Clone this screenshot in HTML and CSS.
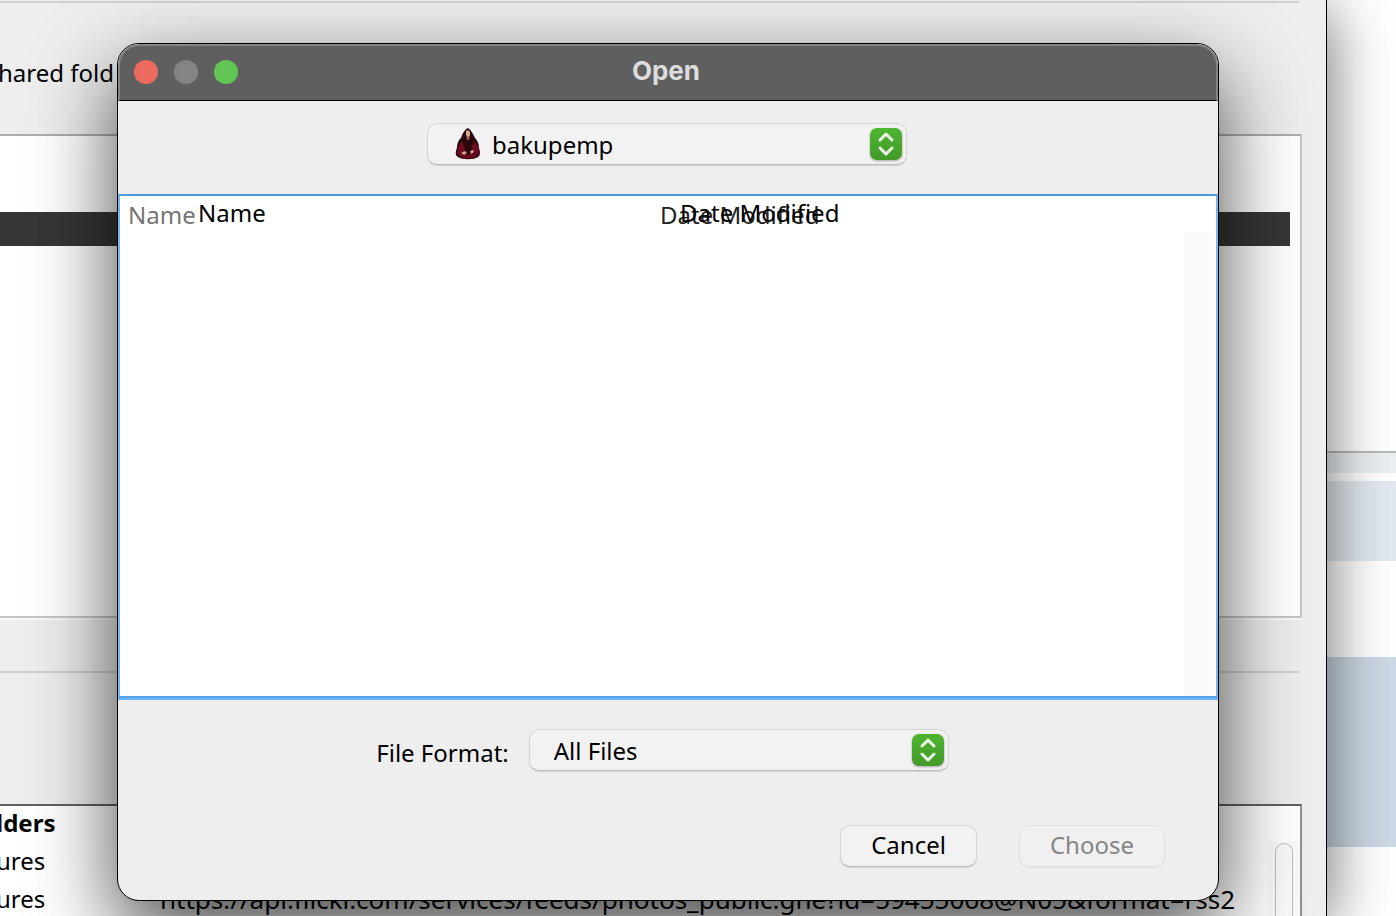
FILE: index.html
```
<!DOCTYPE html>
<html lang="en">
<head>
    <meta charset="UTF-8">
    <meta name="viewport" content="width=device-width, initial-scale=1.0">
    <title>Open</title>
    <link rel="stylesheet" href="styles.css">
</head>
<body>

    <div class="desktop">
        <div class="app-window">
            <hr class="rule">
            <p class="intro">hared fold</p>
            <div class="list-box">
                <div class="selected-row"></div>
            </div>
            <hr class="rule">
            <div class="feed-box">
                <div class="feeds">
                    <div class="feed feed-head">lders</div>
                    <div class="feed"><span>ures</span></div>
                    <div class="feed"><span>ures</span><span class="url">https://api.flickr.com/services/feeds/photos_public.gne?id=59455068@N05&amp;format=rss2</span></div>
                </div>
                <div class="scroll-track"><div class="scroll-thumb"></div></div>
            </div>
        </div>
        <div class="behind">
            <div class="strip strip-light"></div>
            <div class="strip strip-pale"></div>
            <div class="strip strip-blue"></div>
        </div>
    </div>

    <div class="dialog" role="dialog" aria-labelledby="dialogTitle">
        <div class="titlebar">
            <div class="lights">
                <button class="light red" aria-label="Close"></button>
                <button class="light gray" aria-label="Minimize" disabled></button>
                <button class="light green" aria-label="Zoom"></button>
            </div>
            <h1 class="title" id="dialogTitle">Open</h1>
        </div>

        <form class="content">
            <div class="location">
                <div class="combo combo-folder">
                    <select class="select" aria-label="Folder">
                        <option>bakupemp</option>
                    </select>
                    <svg class="avatar" width="26" height="32" viewBox="0 0 26 32">
                        <path d="M13 0C9 2 7.500 6 6 10C3 12 2 17 2 20C0 24 .5 28 3 29C8 32 18 32 23 29C26 27 25 23 24 20C24 15 22 12 20 10C18 6 16 2 13 0Z" fill="#2a080d"/>
                        <path d="M3 20L7 13L10 22L6 28L2 26ZM23 18L19 13L17 22L20 27L24 25Z" fill="#710b20"/>
                        <path d="M8 24L13 27L19 24L22 28Q13 33 4 28Z" fill="#650b1b"/>
                        <path d="M11 3Q13 1 15 4L15 8L13 10L11 7Z" fill="#d5aa91"/>
                        <path d="M11 7L13 9L15 7L14 12H12Z" fill="#8b6254"/>
                        <path d="M6 25L10 23L12 25L9 27ZM15 23L18 22L19 24L16 26Z" fill="#d7a18c"/>
                    </svg>
                    <svg class="arrows" width="34" height="34" viewBox="0 0 34 34">
                        <rect x="1" y="1" width="32" height="32" rx="7"/>
                        <path d="M11 13L17 7L23 13M11 21L17 27L23 21"/>
                    </svg>
                </div>
            </div>

            <div class="file-list">
                <table class="files">
                    <thead>
                        <tr>
                            <th class="col-name">Name<span class="ghost ghost-name">Name</span></th>
                            <th class="col-date">Date Modified<span class="ghost ghost-date">Date Modified</span></th>
                        </tr>
                    </thead>
                </table>
                <div class="file-scroll"></div>
            </div>

            <div class="format-panel">
                <label for="format">File Format:</label>
                <div class="combo combo-format">
                    <select class="select" id="format">
                        <option>All Files</option>
                    </select>
                    <svg class="arrows" width="34" height="34" viewBox="0 0 34 34">
                        <rect x="1" y="1" width="32" height="32" rx="7"/>
                        <path d="M11 13L17 7L23 13M11 21L17 27L23 21"/>
                    </svg>
                </div>
            </div>

            <div class="actions">
                <button type="button" class="btn">Cancel</button>
                <button type="submit" class="btn" disabled>Choose</button>
            </div>
        </form>
    </div>

    <!-- gradient shared by the combo arrows -->
    <svg class="defs" width="0" height="0">
        <linearGradient id="green" x1="0" y1="0" x2="0" y2="1">
            <stop offset="0" stop-color="#4db630"/>
            <stop offset="1" stop-color="#439a29"/>
        </linearGradient>
    </svg>

</body>
</html>
```
FILE: styles.css
```
* {
    box-sizing: border-box;
}

body {
    margin: 0;
    height: 100vh;
    overflow: hidden;
    position: relative;
    background: white;
    color: black;
    font-family: "Noto Sans", sans-serif;
    font-size: 24px;
    line-height: 38px;
}

/* windows behind the dialog */
.desktop {
    display: flex;
    height: 100%;
}

.app-window {
    flex: 1;
    min-width: 0;
    display: flex;
    flex-direction: column;
    padding: 1px 24px 0 0;
    background: #eeeeee;
    border-right: 1px solid black;
    box-shadow: 0 10px 60px rgba(0, 0, 0, 0.6);
    z-index: 1;
}

.rule {
    width: calc(100% - 3px);
    height: 2px;
    margin: 0;
    border: 0;
    background: #d0d0d0;
    flex: none;
}

.intro {
    margin: 51px 0 42px -2px;
}

.list-box {
    height: 484px;
    flex: none;
    margin-bottom: 53px;
    padding: 76px 10px 0 0;
    background: white;
    border: 2px solid #c6c6c6;
    border-top-color: #adadad;
    border-left: 0;
    box-shadow: 0 2px 0 #f8f8f8;
}

.selected-row {
    height: 34px;
    background: #363636;
}

.feed-box {
    flex: 1;
    min-height: 0;
    display: flex;
    margin-top: 131px;
    background: white;
    border-top: 2px solid #606060;
    border-right: 2px solid #909090;
}

.feeds {
    flex: 1;
    min-width: 0;
    margin-left: -4px;
}

.feed {
    display: flex;
    height: 38px;
    line-height: 34px;
    white-space: nowrap;
}

.feed span:first-child {
    width: 164px;
    flex: none;
}

.feed-head {
    font-weight: bold;
}

.url {
    font-size: 26px;
}

.scroll-track {
    width: 32px;
    margin-top: 36px;
    padding: 1px 7px 0;
    background: #fafafa;
}

.scroll-thumb {
    height: 100%;
    border: 1px solid #bebebe;
    border-bottom: 0;
    border-radius: 9px 9px 0 0;
}

.behind {
    width: 69px;
    padding-top: 451px;
}

.strip-light {
    height: 22px;
    margin-bottom: 8px;
    border-top: 2px solid #b8bbbe;
    background: #ebf0f3;
}

.strip-pale {
    height: 80px;
    margin-bottom: 96px;
    background: #e2e9f0;
}

.strip-blue {
    height: 190px;
    background: #ccd9e6;
}

/* dialog */
.dialog {
    position: absolute;
    top: 43px;
    left: 117px;
    right: 177px;
    z-index: 2;
    overflow: hidden;
    background: #eeeeee;
    border: 1px solid black;
    border-radius: 22px;
    box-shadow: 0 32px 84px rgba(0, 0, 0, 0.72);
}

.titlebar {
    display: grid;
    grid-template-columns: 1fr auto 1fr;
    align-items: center;
    height: 57px;
    padding: 0 14px 2px;
    background: #5f5f5f;
    border: 2px solid #848484;
    border-bottom: 1px solid black;
    border-radius: 21px 21px 0 0;
}

.lights {
    display: flex;
    gap: 16px;
}

.light {
    width: 24px;
    height: 24px;
    padding: 0;
    border: 0;
    border-radius: 50%;
}

.red {
    background: #ed6a5e;
}

.gray {
    background: #848484;
}

.green {
    background: #61c554;
}

.title {
    margin: 0;
    padding: 0 4px 2px 0;
    color: #dddddd;
    font-family: Inter, sans-serif;
    font-size: 26px;
    font-weight: bold;
}

.content {
    display: flex;
    flex-direction: column;
}

.location {
    display: flex;
    justify-content: center;
    padding: 22px 2px 29px 0;
}

.combo {
    position: relative;
    display: flex;
    height: 42px;
}

.combo-folder {
    width: 480px;
}

.combo-format {
    width: 420px;
}

.select,
.btn {
    height: 42px;
    font: inherit;
    line-height: 38px;
    color: black;
    background: #f2f2f2;
    border: 1px solid #d6d6d6;
    border-bottom-color: #bdbdbd;
    border-radius: 10px;
    box-shadow: 0 1px 1px rgba(0, 0, 0, 0.12);
}

.select {
    width: 100%;
    padding: 2px 48px 0 24px;
    appearance: none;
}

.combo-folder .select {
    padding-left: 64px;
}

.avatar {
    position: absolute;
    left: 28px;
    top: 5px;
    pointer-events: none;
}

.arrows {
    position: absolute;
    right: 4px;
    top: 4px;
    pointer-events: none;
    filter: drop-shadow(0 1px 1px rgba(0, 0, 0, 0.3));
}

.arrows rect {
    fill: url(#green);
}

.arrows path {
    fill: none;
    stroke: #eef8ea;
    stroke-width: 3;
    stroke-linecap: round;
    stroke-linejoin: round;
}

.file-list {
    display: flex;
    flex-direction: column;
    height: 504px;
    margin-bottom: 2px;
    background: white;
    border: 2px solid #74b8f3;
    border-top-color: #4b9be0;
    border-bottom-color: #54a3ea;
    box-shadow: 0 2px 0 #6ab6fb;
}

.files {
    width: 100%;
    table-layout: fixed;
    border-collapse: collapse;
}

.files th {
    position: relative;
    height: 36px;
    padding: 2px 0 0 8px;
    font-weight: normal;
    line-height: 34px;
    text-align: left;
}

.files .col-name {
    width: 532px;
    color: #757575;
}

.files .col-date {
    color: #222222;
}

/* column titles drawn a second time over the header */
.ghost {
    position: absolute;
    top: 0;
    color: black;
}

.ghost-name {
    left: 78px;
}

.ghost-date {
    left: 28px;
}

.file-scroll {
    flex: 1;
    width: 30px;
    margin: 0 2px 0 auto;
    background: #fafafa;
}

.format-panel {
    display: flex;
    justify-content: center;
    gap: 20px;
    margin: 10px 16px 0;
    padding: 18px 11px 24px 0;
    border: 1px solid #f0f0f0;
    border-radius: 10px;
}

.format-panel label {
    height: 42px;
    line-height: 48px;
}

.actions {
    display: flex;
    justify-content: flex-end;
    gap: 42px;
    padding: 29px 53px 33px;
}

.btn {
    padding: 0 30px 2px;
}

.btn:disabled {
    color: #858585;
    background: #f0f0f0;
    border-color: #e0e0e0;
    box-shadow: 0 1px 1px rgba(0, 0, 0, 0.05);
}

.defs {
    position: absolute;
}
```
